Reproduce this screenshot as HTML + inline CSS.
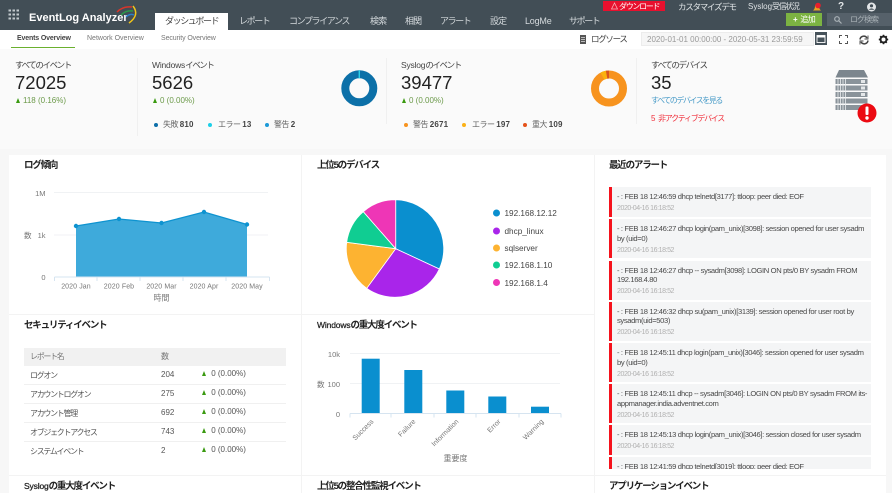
<!DOCTYPE html>
<html lang="ja"><head><meta charset="utf-8"><title>EventLog Analyzer</title>
<style>
html,body{margin:0;padding:0}
body{width:892px;height:493px;overflow:hidden;position:relative;background:#f7f7f7;font-family:"Liberation Sans","Noto Sans CJK JP",sans-serif;color:#333;font-size:9px}
.a{position:absolute;white-space:nowrap;line-height:1.2}
.box{position:absolute}
.l{letter-spacing:-.2px}
.nav{top:16px;color:#d5dadd;font-size:9px;letter-spacing:-1.4px}
.top{top:1.5px;color:#dfe3e5;font-size:8.5px;letter-spacing:-1.25px}
.h{font-size:9.5px;font-weight:bold;color:#222;letter-spacing:-1.2px}
.h span{font-size:8.5px;font-weight:normal;letter-spacing:-.15px;-webkit-text-stroke:.25px #222}
.lbl{font-size:8.5px;color:#444;letter-spacing:-1.4px}
.num{font-size:18.5px;color:#222;line-height:22px}
.g{font-size:8px;color:#6c9a4a}
.tri{display:inline-block;width:0;height:0;border-left:2.5px solid transparent;border-right:2.5px solid transparent;border-bottom:5px solid #3a9a10;margin-right:3px;vertical-align:0}
.leg{font-size:8px;color:#666;letter-spacing:-.5px}
.leg b{color:#444;letter-spacing:.2px}
.dot{position:absolute;width:4px;height:4px;border-radius:50%}
.alert{position:absolute;left:609px;width:262px;background:#f4f5f6;border-left:3px solid #f5121c;box-sizing:border-box;padding:5px 0 0 5px;font-size:7.6px;letter-spacing:-.36px;line-height:9.6px;color:#4a4a4a;overflow:hidden}
.alert i{display:block;font-style:normal;color:#b0b0b0;font-size:7px;letter-spacing:-.42px;margin-top:2.4px}
.row{position:absolute;left:24px;width:262px;border-bottom:1px solid #f0f0f0;height:19px}
.t{font-size:8px;color:#555}
.j{letter-spacing:-1.3px}
</style></head><body>

<div class="box" style="left:0;top:0;width:892px;height:30px;background:#424e56"></div>
<svg class="box" style="left:8px;top:8px" width="13" height="13"><g fill="#c3c9cd"><rect x="0.500" y="1.500" width="2.500" height="2"/><rect x="4.500" y="1.500" width="2.500" height="2"/><rect x="8.500" y="1.500" width="2.500" height="2"/><rect x="0.500" y="5.500" width="2.500" height="2"/><rect x="4.500" y="5.500" width="2.500" height="2"/><rect x="8.500" y="5.500" width="2.500" height="2"/><rect x="0.500" y="9.500" width="2.500" height="2"/><rect x="4.500" y="9.500" width="2.500" height="2"/><rect x="8.500" y="9.500" width="2.500" height="2"/></g></svg>
<div class="a" style="left:29px;top:11.500px;color:#fff;font-size:11px;font-weight:bold">EventLog Analyzer</div>
<svg class="box" style="left:115px;top:4px" width="24" height="22" fill="none" stroke-width="1.500"><path d="M2 8Q8 2 17 3" stroke="#d8352a"/><path d="M6 11Q11 6 18 7" stroke="#2a9a4a"/><path d="M11 13Q15 9 19 11" stroke="#2a7fc8"/><path d="M18 2Q25 11 14 19" stroke="#f0c419"/></svg>

<div class="box" style="left:155px;top:13px;width:73px;height:18px;background:#fff"></div>
<div class="a nav" style="left:165px;color:#444">ダッシュボード</div>
<div class="a nav" style="left:239px">レポート</div>
<div class="a nav" style="left:289px">コンプライアンス</div>
<div class="a nav" style="left:370px;letter-spacing:-.9px">検索</div>
<div class="a nav" style="left:405px;letter-spacing:-.9px">相関</div>
<div class="a nav" style="left:440px">アラート</div>
<div class="a nav" style="left:490px;letter-spacing:-.9px">設定</div>
<div class="a nav" style="left:525px;letter-spacing:-.2px">LogMe</div>
<div class="a nav" style="left:569px">サポート</div>

<div class="box" style="left:603px;top:1px;width:62px;height:10px;background:#e8102e"></div>
<svg class="box" style="left:611px;top:2px" width="7" height="8"><path d="M3.500 1L6.500 7H.5Z" fill="none" stroke="#f7b0b8" stroke-width=".8"/></svg>
<div class="a" style="left:619px;top:1.500px;color:#fff;font-size:8px;letter-spacing:-1.3px">ダウンロード</div>
<div class="a top" style="left:678px">カスタマイズデモ</div>
<div class="a top" style="left:748px;font-size:8px;letter-spacing:-1.4px"><span class="l" style="letter-spacing:0">Syslog</span>受信状況</div>
<svg class="box" style="left:811px;top:1px" width="12" height="11"><path d="M2 9.500Q4 8 4 5Q4.500 3 6 3Q7.500 3 8 5Q8 8 10 9.500Z" fill="#e8a020"/><circle cx="7" cy="4.500" r="2.800" fill="#e81f2c"/></svg>
<div class="a" style="left:838px;top:1px;color:#e4e7e9;font-size:10px;font-weight:bold">?</div>
<svg class="box" style="left:866px;top:2px" width="11" height="10"><circle cx="5.500" cy="5" r="4.500" fill="#e4e7e9"/><circle cx="5.500" cy="3.800" r="1.600" fill="#424e56"/><path d="M2.500 7.800Q5.500 5 8.500 7.800Z" fill="#424e56"/></svg>
<div class="box" style="left:786px;top:13px;width:36px;height:13px;background:#7cb342"></div>
<div class="a" style="left:793px;top:15px;color:#fff;font-size:8px;letter-spacing:-.6px"><b>+</b>&nbsp; 追加</div>
<div class="box" style="left:827px;top:13px;width:65px;height:13px;background:#56616a"></div>
<svg class="box" style="left:834px;top:16px" width="8" height="8" fill="none" stroke="#aab2b7" stroke-width="1.200"><circle cx="3" cy="3" r="2.300"/><path d="M4.700 4.700L7.500 7.500"/></svg>
<div class="a" style="left:850px;top:15px;color:#aab2b7;font-size:8px;letter-spacing:-1px">ログ検索</div>

<div class="box" style="left:0;top:30px;width:892px;height:19px;background:#fff"></div>
<div class="box" style="left:11px;top:46.500px;width:64px;height:1.500px;background:#6ab02e"></div>
<div class="a" style="left:17px;top:35px;font-size:7px;font-weight:bold;color:#444;letter-spacing:-.15px">Events Overview</div>
<div class="a" style="left:87px;top:35px;font-size:7px;color:#777">Network Overview</div>
<div class="a" style="left:161px;top:35px;font-size:7px;color:#777;letter-spacing:-.1px">Security Overview</div>
<svg class="box" style="left:579px;top:34px" width="8" height="11"><rect x="1" y="1" width="6" height="9" fill="#555"/><path d="M2 3.500h4M2 5.500h4M2 7.500h4" stroke="#ddd" stroke-width=".7"/></svg>
<div class="a" style="left:591px;top:34px;font-size:8.500px;color:#444;letter-spacing:-1.3px">ログソース</div>
<div class="box" style="left:641px;top:32px;width:173px;height:14px;background:#f6f6f6;border:1px solid #ececec;box-sizing:border-box"></div>
<div class="a" style="left:647px;top:34.500px;font-size:8px;color:#999">2020-01-01 00:00:00 - 2020-05-31 23:59:59</div>
<svg class="box" style="left:815px;top:32px" width="12" height="13"><rect width="12" height="13" fill="#46525a"/><rect x="2" y="3.500" width="8" height="7" fill="none" stroke="#fff" stroke-width=".9"/><rect x="2" y="3.500" width="8" height="2" fill="#fff"/></svg>
<svg class="box" style="left:839px;top:35px" width="10" height="10" fill="none" stroke="#555"><path d="M0.500 3V0.500H3M6 0.500H8.500V3M8.500 6V8.500H6M3 8.500H0.500V6"/></svg>
<svg class="box" style="left:859px;top:35px" width="10" height="10" fill="none" stroke="#444" stroke-width="1.500"><path d="M1 4.500A3.800 3.800 0 0 1 8 3M9 5.500A3.800 3.800 0 0 1 2 7"/><path d="M9 .5V4H5.500M1 9.500V6H4.500" stroke-width=".9"/></svg>
<svg class="box" style="left:878px;top:34px" width="11" height="11"><circle cx="5.500" cy="5.500" r="3" fill="none" stroke="#222" stroke-width="2"/><path d="M5.500 .8V2.500M5.500 8.500V10.200M.8 5.500H2.500M8.500 5.500H10.200M2.200 2.200L3.400 3.400M7.600 7.600L8.800 8.800M2.200 8.800L3.400 7.600M7.600 3.400L8.800 2.200" stroke="#222" stroke-width="1.500"/></svg>

<div class="box" style="left:0;top:49px;width:892px;height:100px;background:#fafafa"></div>
<div class="box" style="left:136.500px;top:58px;width:1px;height:78px;background:#f0f0f0"></div>
<div class="box" style="left:386px;top:58px;width:1px;height:66px;background:#f0f0f0"></div>
<div class="box" style="left:636px;top:58px;width:1px;height:66px;background:#f0f0f0"></div>

<div class="a lbl" style="left:15px;top:60px">すべてのイベント</div>
<div class="a num" style="left:15px;top:72px">72025</div>
<div class="a g" style="left:16px;top:96px"><span class="tri"></span>118 (0.16%)</div>

<div class="a lbl" style="left:152px;top:60px"><span class="l">Windows</span>イベント</div>
<div class="a num" style="left:152px;top:72px">5626</div>
<div class="a g" style="left:153px;top:96px"><span class="tri"></span>0 (0.00%)</div>
<div class="dot" style="left:154px;top:123px;background:#0c6ea8"></div>
<div class="a leg" style="left:163px;top:120px">失敗 <b>810</b></div>
<div class="dot" style="left:208px;top:123px;background:#1ccfe8"></div>
<div class="a leg" style="left:218px;top:120px">エラー <b>13</b></div>
<div class="dot" style="left:265px;top:123px;background:#1c9ad8"></div>
<div class="a leg" style="left:274px;top:120px">警告 <b>2</b></div>
<svg class="box" style="left:340px;top:70px" width="40" height="38"><circle cx="19.300" cy="18.300" r="14" fill="none" stroke="#0c70a8" stroke-width="8"/><rect x="18.600" y="0.300" width="1.400" height="8" fill="#2ad0e8"/></svg>

<div class="a lbl" style="left:401px;top:60px"><span class="l">Syslog</span>のイベント</div>
<div class="a num" style="left:401px;top:72px">39477</div>
<div class="a g" style="left:402px;top:96px"><span class="tri"></span>0 (0.00%)</div>
<div class="dot" style="left:404px;top:123px;background:#f7931e"></div>
<div class="a leg" style="left:413px;top:120px">警告 <b>2671</b></div>
<div class="dot" style="left:462px;top:123px;background:#fbb116"></div>
<div class="a leg" style="left:472px;top:120px">エラー <b>197</b></div>
<div class="dot" style="left:523px;top:123px;background:#e5521a"></div>
<div class="a leg" style="left:532px;top:120px">重大 <b>109</b></div>
<svg class="box" style="left:590px;top:70px" width="40" height="38" viewBox="0 0 40 38"><circle cx="19" cy="18.500" r="14" fill="none" stroke="#f7931e" stroke-width="8"/><path d="M19 .5A18 18 0 0 0 10.500 2.600L14.300 9.700A10 10 0 0 1 19 8.500Z" fill="#fbb10e"/><path d="M19 .5A18 18 0 0 0 15.900 .8L17.300 8.650A10 10 0 0 1 19 8.500Z" fill="#d9531e"/></svg>

<div class="a lbl" style="left:651px;top:60px">すべてのデバイス</div>
<div class="a num" style="left:651px;top:72px">35</div>
<div class="a" style="left:651px;top:96px;font-size:8px;color:#4a9cc8;letter-spacing:-1.45px">すべてのデバイスを見る</div>
<div class="a" style="left:651px;top:114px;font-size:8px;color:#f0303c;letter-spacing:-1.300px;word-spacing:3px">5 非アクティブデバイス</div>
<svg class="box" style="left:832px;top:66px" width="40" height="46">
<path d="M7 4H32L36 11.500H3.500Z" fill="#7c868e"/>
<g fill="#8a939a"><rect x="3.500" y="13" width="32" height="5"/><rect x="3.500" y="19.500" width="32" height="5"/><rect x="3.500" y="26" width="32" height="5"/><rect x="3.500" y="32.500" width="32" height="5"/><rect x="3.500" y="39" width="32" height="5"/></g>
<path d="M6 13V44M8.500 13V44M11 13V44M13.500 13V44" stroke="#eceef0" stroke-width=".8"/>
<g fill="#e4e7e9"><rect x="29" y="14" width="4" height="3"/><rect x="29" y="20.500" width="4" height="3"/><rect x="29" y="27" width="4" height="3"/></g></svg>
<svg class="box" style="left:856px;top:102px" width="22" height="22"><circle cx="11" cy="11" r="9.500" fill="#ec0a12"/><rect x="9.500" y="4.500" width="3" height="8.500" rx="1" fill="#fff"/><circle cx="11" cy="16" r="1.700" fill="#fff"/></svg>

<div class="box" style="left:9px;top:155px;width:877px;height:338px;background:#fff"></div>
<div class="box" style="left:301px;top:155px;width:1px;height:338px;background:#f3f3f3"></div>
<div class="box" style="left:594px;top:155px;width:1px;height:338px;background:#f3f3f3"></div>
<div class="box" style="left:9px;top:314px;width:585px;height:1px;background:#f3f3f3"></div>
<div class="box" style="left:9px;top:475px;width:877px;height:1px;background:#f3f3f3"></div>

<div class="a h" style="left:24px;top:160px">ログ傾向</div>
<div class="a h" style="left:317px;top:160px">上位5のデバイス</div>
<div class="a h" style="left:609px;top:160px">最近のアラート</div>
<div class="a h" style="left:24px;top:320px">セキュリティイベント</div>
<div class="a h" style="left:317px;top:320px"><span>Windows</span>の重大度イベント</div>
<div class="a h" style="left:24px;top:481px"><span>Syslog</span>の重大度イベント</div>
<div class="a h" style="left:317px;top:481px">上位5の整合性監視イベント</div>
<div class="a h" style="left:609px;top:481px">アプリケーションイベント</div>

<svg class="box" style="left:0;top:150px" width="300" height="165" font-family="Liberation Sans,Noto Sans CJK JP,sans-serif">
<path d="M54 42.500H268M54 85H268" stroke="#f0f2f4"/>
<path d="M76 76L119 69L161.500 73L204 62L247 74.500V126.500H76Z" fill="#3eaadb" stroke="none"/>
<path d="M76 76L119 69L161.500 73L204 62L247 74.500" fill="none" stroke="#0e93d0" stroke-width="1.300"/>
<g fill="#0e93d0"><circle cx="76" cy="76" r="2.200"/><circle cx="119" cy="69" r="2.200"/><circle cx="161.500" cy="73" r="2.200"/><circle cx="204" cy="62" r="2.200"/><circle cx="247" cy="74.500" r="2.200"/></g>
<path d="M54.500 127H269.500M54.500 127v4M97 127v4M140 127v4M183 127v4M226 127v4M269.500 127v4" stroke="#d6e4f0" fill="none"/>
<g font-size="7.500" fill="#777"><text x="45.500" y="46" text-anchor="end">1M</text><text x="45.500" y="88" text-anchor="end">1k</text><text x="45.500" y="130" text-anchor="end">0</text>
<text x="24" y="88">数</text>
<g text-anchor="middle" font-size="7" letter-spacing=".1"><text x="76" y="138.500">2020 Jan</text><text x="119" y="138.500">2020 Feb</text><text x="161.500" y="138.500">2020 Mar</text><text x="204" y="138.500">2020 Apr</text><text x="247" y="138.500">2020 May</text></g>
<text x="161.500" y="150.500" text-anchor="middle" font-size="8">時間</text></g>
</svg>

<svg class="box" style="left:300px;top:150px" width="294" height="165" font-family="Liberation Sans,Noto Sans CJK JP,sans-serif">
<g stroke="#fff" stroke-width=".8">
<path d="M95.700 98.700V49.700A49 49 0 0 1 139.300 119Z" fill="#0a8fcf"/>
<path d="M95.700 98.700L139.300 119A49 49 0 0 1 66.700 138.300Z" fill="#a925ea"/>
<path d="M95.700 98.700L66.700 138.300A49 49 0 0 1 46.700 92.300Z" fill="#fdb331"/>
<path d="M95.700 98.700L46.700 92.300A49 49 0 0 1 63.300 61.700Z" fill="#10cd92"/>
<path d="M95.700 98.700L63.300 61.700A49 49 0 0 1 95.700 49.700Z" fill="#ee36b6"/>
</g>
<circle cx="196.500" cy="63" r="3.500" fill="#0a8fcf"/><circle cx="196.500" cy="81" r="3.500" fill="#a925ea"/><circle cx="196.500" cy="98" r="3.500" fill="#fdb331"/><circle cx="196.500" cy="115" r="3.500" fill="#10cd92"/><circle cx="196.500" cy="132.500" r="3.500" fill="#ee36b6"/>
<g font-size="8.200" fill="#444"><text x="204.500" y="66">192.168.12.12</text><text x="204.500" y="84">dhcp_linux</text><text x="204.500" y="101">sqlserver</text><text x="204.500" y="118">192.168.1.10</text><text x="204.500" y="136">192.168.1.4</text></g>
</svg>

<div class="box" style="left:24px;top:348px;width:262px;height:18px;background:#f1f1f1"></div>
<div class="a t j" style="left:30px;top:352px;color:#777">レポート名</div>
<div class="a t" style="left:161px;top:352px;color:#777">数</div>
<div class="row" style="top:365px"></div><div class="row" style="top:384px"></div><div class="row" style="top:403px"></div><div class="row" style="top:422px"></div>
<div class="a t j" style="left:30px;top:371px">ログオン</div><div class="a t" style="left:161px;top:370px">204</div><div class="a t" style="left:202px;top:369px"><span class="tri"></span>&nbsp;0 (0.00%)</div>
<div class="a t j" style="left:30px;top:390px">アカウントログオン</div><div class="a t" style="left:161px;top:389px">275</div><div class="a t" style="left:202px;top:388px"><span class="tri"></span>&nbsp;0 (0.00%)</div>
<div class="a t j" style="left:30px;top:409px">アカウント管理</div><div class="a t" style="left:161px;top:408px">692</div><div class="a t" style="left:202px;top:407px"><span class="tri"></span>&nbsp;0 (0.00%)</div>
<div class="a t j" style="left:30px;top:428px">オブジェクトアクセス</div><div class="a t" style="left:161px;top:427px">743</div><div class="a t" style="left:202px;top:426px"><span class="tri"></span>&nbsp;0 (0.00%)</div>
<div class="a t j" style="left:30px;top:447px">システムイベント</div><div class="a t" style="left:161px;top:446px">2</div><div class="a t" style="left:202px;top:445px"><span class="tri"></span>&nbsp;0 (0.00%)</div>

<svg class="box" style="left:300px;top:315px" width="294" height="160" font-family="Liberation Sans,Noto Sans CJK JP,sans-serif">
<path d="M50 38.500H260M50 68.500H260" stroke="#f0f2f4"/>
<g fill="#0a8fcf"><rect x="61.700" y="43.700" width="18" height="54.800"/><rect x="104.300" y="55" width="18" height="43.500"/><rect x="146.300" y="75.500" width="18" height="23"/><rect x="188.300" y="81.500" width="18" height="17"/><rect x="231" y="91.700" width="18" height="6.800"/></g>
<path d="M50 98.500H261M50 98.500v4M91 98.500v4M134 98.500v4M176 98.500v4M219 98.500v4M261 98.500v4" stroke="#d6e4f0" fill="none"/>
<g font-size="7.500" fill="#777"><text x="40" y="42" text-anchor="end">10k</text><text x="40" y="72" text-anchor="end">100</text><text x="40" y="102" text-anchor="end">0</text><text x="17" y="72">数</text>
<g text-anchor="end" font-size="7"><text transform="translate(74,107) rotate(-45)">Success</text><text transform="translate(116,107) rotate(-45)">Failure</text><text transform="translate(159,107) rotate(-45)">Information</text><text transform="translate(201,107) rotate(-45)">Error</text><text transform="translate(244,107) rotate(-45)">Warning</text></g>
<text x="155.500" y="146" text-anchor="middle" font-size="8">重要度</text></g>
</svg>

<div class="alert" style="top:187px;height:30px">- : FEB 18 12:46:59 dhcp telnetd[3177]: ttloop: peer died: EOF<i>2020-04-16 16:18:52</i></div>
<div class="alert" style="top:219px;height:39px">- : FEB 18 12:46:27 dhcp login(pam_unix)[3098]: session opened for user sysadm by (uid=0)<i>2020-04-16 16:18:52</i></div>
<div class="alert" style="top:260.500px;height:39.500px">- : FEB 18 12:46:27 dhcp -- sysadm[3098]: LOGIN ON pts/0 BY sysadm FROM 192.168.4.80<i>2020-04-16 16:18:52</i></div>
<div class="alert" style="top:301.500px;height:39px">- : FEB 18 12:46:32 dhcp su(pam_unix)[3139]: session opened for user root by sysadm(uid=503)<i>2020-04-16 16:18:52</i></div>
<div class="alert" style="top:343px;height:39px">- : FEB 18 12:45:11 dhcp login(pam_unix)[3046]: session opened for user sysadm by (uid=0)<i>2020-04-16 16:18:52</i></div>
<div class="alert" style="top:384px;height:39px">- : FEB 18 12:45:11 dhcp -- sysadm[3046]: LOGIN ON pts/0 BY sysadm FROM its-appmanager.india.adventnet.com<i>2020-04-16 16:18:52</i></div>
<div class="alert" style="top:425px;height:30px">- : FEB 18 12:45:13 dhcp login(pam_unix)[3046]: session closed for user sysadm<i>2020-04-16 16:18:52</i></div>
<div class="alert" style="top:457.300px;height:12px">- : FEB 18 12:41:59 dhcp telnetd[3019]: ttloop: peer died: EOF</div>

</body></html>
